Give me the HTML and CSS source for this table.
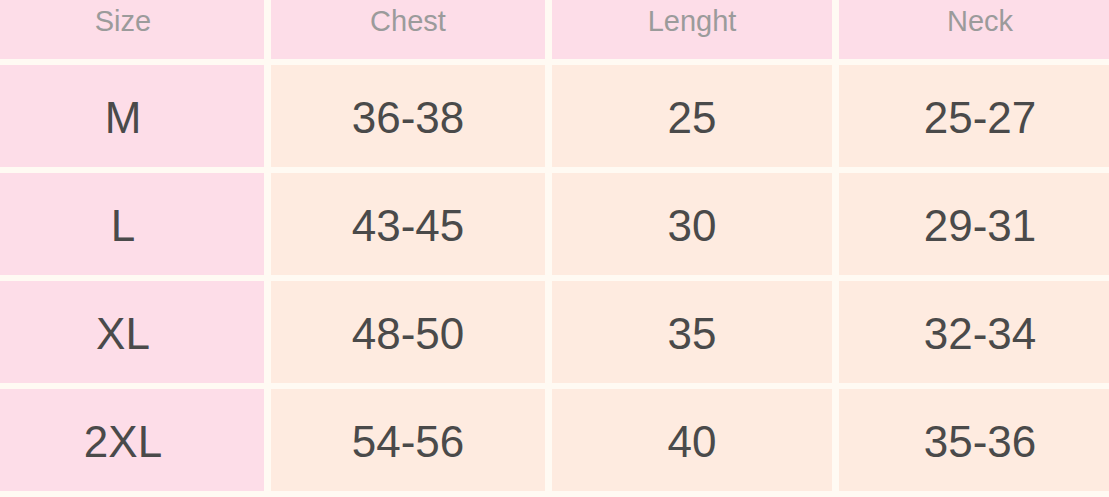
FILE: index.html
```html
<!DOCTYPE html>
<html>
<head>
<meta charset="utf-8">
<link rel="stylesheet" href="styles.css">
</head>
<body>
<div class="chart">
  <div class="cell head size">Size</div>
  <div class="cell head">Chest</div>
  <div class="cell head">Lenght</div>
  <div class="cell head neck">Neck</div>

  <div class="cell val size">M</div>
  <div class="cell val">36-38</div>
  <div class="cell val">25</div>
  <div class="cell val neck">25-27</div>

  <div class="cell val size">L</div>
  <div class="cell val">43-45</div>
  <div class="cell val">30</div>
  <div class="cell val neck">29-31</div>

  <div class="cell val size">XL</div>
  <div class="cell val">48-50</div>
  <div class="cell val">35</div>
  <div class="cell val neck">32-34</div>

  <div class="cell val size">2XL</div>
  <div class="cell val">54-56</div>
  <div class="cell val">40</div>
  <div class="cell val neck">35-36</div>
</div>
</body>
</html>
```

FILE: styles.css
```css
html, body {
  margin: 0;
  padding: 0;
  background: #fffaf3;
}

.chart {
  display: grid;
  grid-template-columns: 264px 274px 280px 270px;
  grid-template-rows: 59px repeat(4, 102px);
  column-gap: 7px;
  row-gap: 6px;
  width: 1109px;
  font-family: "Liberation Sans", Arial, sans-serif;
}

.cell {
  display: flex;
  justify-content: center;
  background: #feebe0;
}

.head {
  align-items: flex-start;
  background: #fddde8;
  color: #9b9b9b;
  font-size: 29px;
  line-height: 32px;
  padding-top: 5px;
}

.val {
  align-items: center;
  color: #4a4a4a;
  font-size: 44px;
  padding-top: 4px;
}

.size {
  background: #fddde8;
  padding-right: 18px;
}

.neck {
  padding-left: 12px;
}
```
